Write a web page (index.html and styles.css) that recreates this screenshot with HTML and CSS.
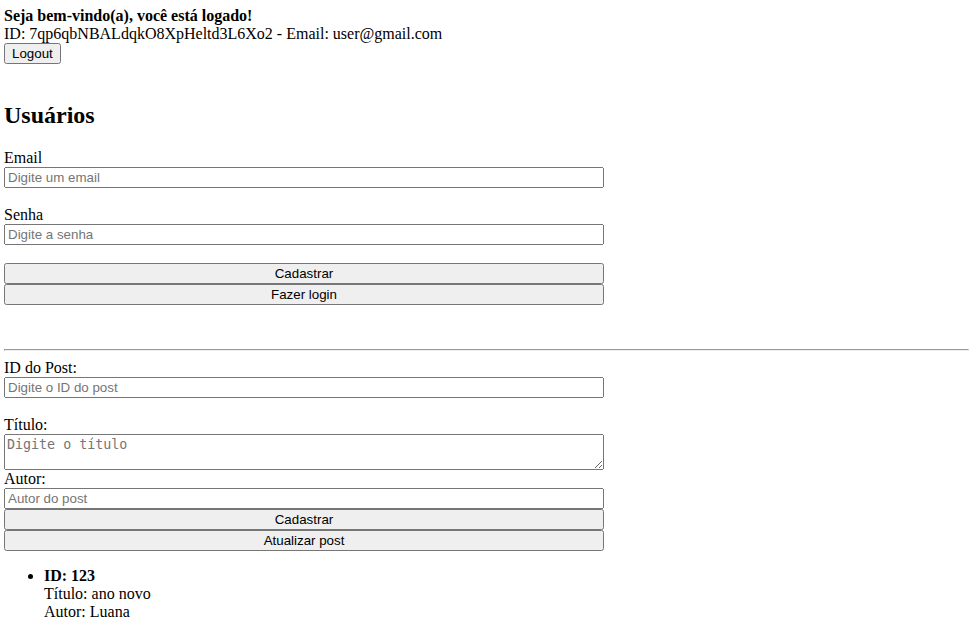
FILE: index.html
```html
<!DOCTYPE html>
<html lang="pt-BR">
<head>
<meta charset="utf-8">
<title>Usuários</title>
<link rel="stylesheet" href="styles.css">
</head>
<body class="page">
  <div class="welcome">
    <strong>Seja bem-vindo(a), você está logado!</strong><br>
    <span>ID: 7qp6qbNBALdqkO8XpHeltd3L6Xo2 - Email: user@gmail.com</span><br>
    <button class="btn">Logout</button>
  </div>

  <h2 class="title">Usuários</h2>

  <div class="form">
    <label class="label">Email</label>
    <input class="field" type="text" placeholder="Digite um email">
    <label class="label gap">Senha</label>
    <input class="field" type="password" placeholder="Digite a senha">
    <button class="btn wide gap">Cadastrar</button>
    <button class="btn wide">Fazer login</button>
  </div>

  <hr class="rule">

  <div class="form">
    <label class="label">ID do Post:</label>
    <input class="field" type="text" placeholder="Digite o ID do post">
    <label class="label gap">Título:</label>
    <textarea class="area" placeholder="Digite o título"></textarea>
    <label class="label">Autor:</label>
    <input class="field" type="text" placeholder="Autor do post">
    <button class="btn wide">Cadastrar</button>
    <button class="btn wide">Atualizar post</button>
  </div>

  <ul class="posts">
    <li>
      <strong>ID: 123</strong><br>
      <span>Título: ano novo</span><br>
      <span>Autor: Luana</span>
    </li>
  </ul>
</body>
</html>
```
FILE: styles.css
```css
.page {
  margin: 0;
  padding: 7px 0 0 4px;
  font-family: "Liberation Serif", "Times New Roman", serif;
  font-size: 16px;
  color: #000;
  background: #fff;
}

.welcome {
  line-height: normal;
}

.btn {
  font-family: "Liberation Sans", Arial, sans-serif;
  font-size: 13.333px;
  margin: 0;
}

.title {
  font-size: 24px;
  font-weight: bold;
  margin: 38px 0 20px;
}

.form {
  display: flex;
  flex-direction: column;
  align-items: flex-start;
}

.label {
  display: block;
}

.gap {
  margin-top: 18px;
}

.field {
  display: block;
  box-sizing: border-box;
  width: 600px;
  height: 21px;
  margin: 0;
  font-family: "Liberation Sans", Arial, sans-serif;
  font-size: 13.333px;
}

.wide {
  display: block;
  box-sizing: border-box;
  width: 600px;
  height: 21px;
}

.area {
  display: block;
  box-sizing: border-box;
  width: 600px;
  height: 36px;
  margin: 0;
  font-family: "DejaVu Sans Mono", monospace;
  font-size: 13.333px;
}

.rule {
  margin: 44px 0 8px;
}

.posts {
  margin: 16px 0;
  padding-left: 40px;
}
```
